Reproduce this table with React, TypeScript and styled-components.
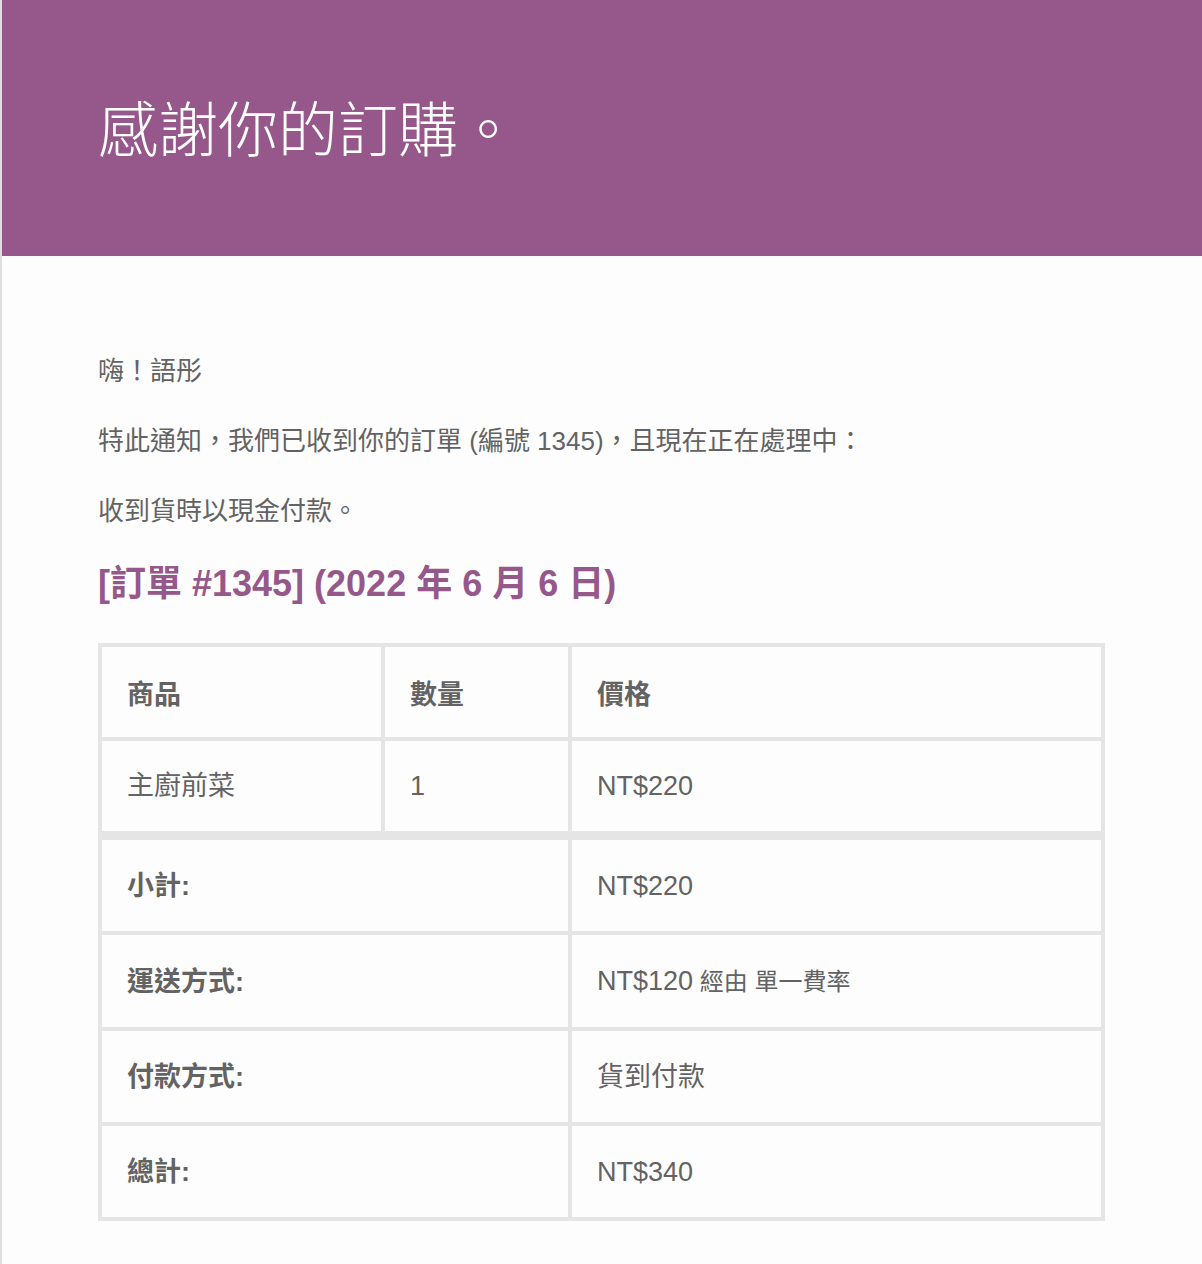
import styled, { createGlobalStyle } from 'styled-components';

const GlobalStyle = createGlobalStyle`
  html, body {
    margin: 0;
    padding: 0;
    background: #fdfdfd;
  }
  body {
    font-family: 'Liberation Sans', Helvetica, Arial, 'Noto Sans CJK TC', sans-serif;
  }
`;

const rows = [
  { label: '小計:', value: 'NT$220' },
  { label: '運送方式:', value: 'NT$120', note: '經由 單一費率' },
  { label: '付款方式:', value: '貨到付款' },
  { label: '總計:', value: 'NT$340' },
];

const App = () => {
  return (
    <>
      <GlobalStyle />
      <Page>
        <Header>
          <HeaderTitle>感謝你的訂購。</HeaderTitle>
        </Header>
        <Content>
          <Paragraph>嗨！語彤</Paragraph>
          <Paragraph>特此通知，我們已收到你的訂單 (編號 1345)，且現在正在處理中：</Paragraph>
          <Paragraph>收到貨時以現金付款。</Paragraph>
          <OrderTitle>[訂單 #1345] (2022 年 6 月 6 日)</OrderTitle>
          <OrderTable>
            <thead>
              <tr>
                <HeadCell $width={283}>商品</HeadCell>
                <HeadCell $width={187}>數量</HeadCell>
                <HeadCell>價格</HeadCell>
              </tr>
            </thead>
            <tbody>
              <tr>
                <Cell>主廚前菜</Cell>
                <Cell>1</Cell>
                <Cell>NT$220</Cell>
              </tr>
            </tbody>
            <tfoot>
              {rows.map((row, i) => (
                <tr key={row.label}>
                  <FootLabel colSpan={2} $first={i === 0}>
                    {row.label}
                  </FootLabel>
                  <FootValue $first={i === 0}>
                    {row.value}
                    {row.note && <Note> {row.note}</Note>}
                  </FootValue>
                </tr>
              ))}
            </tfoot>
          </OrderTable>
        </Content>
      </Page>
    </>
  );
};

export default App;

const Page = styled.div`
  width: 1202px;
  min-height: 1264px;
  box-sizing: border-box;
  border-left: 2px solid #dedede;
  background: #fdfdfd;
`;

const Header = styled.div`
  background: #96588a;
  height: 256px;
  box-sizing: border-box;
  padding: 96px 96px 0 96px;
`;

const HeaderTitle = styled.h1`
  margin: 0;
  color: #ffffff;
  font-size: 60px;
  font-weight: 300;
  line-height: 72px;
  font-family: 'Liberation Sans', Helvetica, 'Noto Sans CJK TC', sans-serif;
`;

const Content = styled.div`
  padding: 96px 97px 40px 96px;
  color: #636363;
`;

const Paragraph = styled.p`
  margin: 0 0 32px;
  font-size: 26px;
  line-height: 38px;
`;

const OrderTitle = styled.h2`
  margin: 0 0 37px;
  color: #96588a;
  font-size: 36px;
  font-weight: 700;
  line-height: 44px;
`;

const OrderTable = styled.table`
  width: 1007px;
  border: 2px solid #e5e5e5;
  border-collapse: separate;
  border-spacing: 0;
  table-layout: fixed;
  color: #636363;
  font-size: 27px;
`;

const Cell = styled.td`
  border: 2px solid #e5e5e5;
  padding: 25px;
  line-height: 40px;
  text-align: left;
  vertical-align: middle;
`;

const HeadCell = styled.th<{ $width?: number }>`
  border: 2px solid #e5e5e5;
  padding: 28px 25px 22px;
  line-height: 40px;
  text-align: left;
  font-weight: 700;
  box-sizing: border-box;
  ${(p) => (p.$width ? `width: ${p.$width}px;` : '')}
`;

const FootLabel = styled.th<{ $first?: boolean }>`
  border: 2px solid #e5e5e5;
  border-top-width: ${(p) => (p.$first ? '7px' : '2px')};
  padding: 26px 25px 25px;
  line-height: 40px;
  text-align: left;
  font-weight: 700;
`;

const FootValue = styled.td<{ $first?: boolean }>`
  border: 2px solid #e5e5e5;
  border-top-width: ${(p) => (p.$first ? '7px' : '2px')};
  padding: 26px 25px 25px;
  line-height: 40px;
  text-align: left;
`;

const Note = styled.small`
  font-size: 24px;
`;
